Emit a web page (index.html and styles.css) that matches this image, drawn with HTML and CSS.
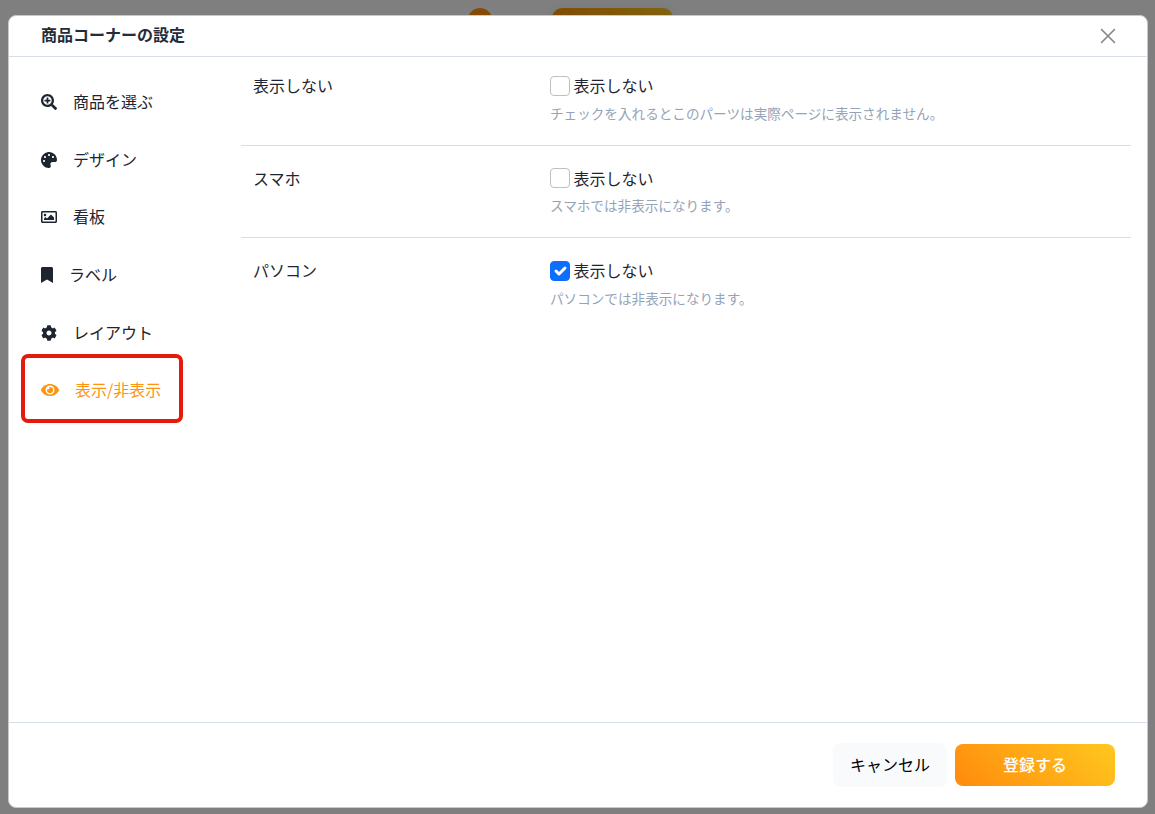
FILE: index.html
```html
<!DOCTYPE html>
<html lang="ja">
<head>
    <meta charset="UTF-8">
    <meta name="viewport" content="width=device-width, initial-scale=1.0">
    <title>商品コーナーの設定</title>
    <link rel="stylesheet" href="styles.css">
</head>
<body>
    <!-- Page behind the modal -->
    <div class="page-behind">
        <span class="behind-dot"></span>
        <span class="behind-button"></span>
    </div>

    <div class="modal">
        <div class="modal-header">
            <h5 class="modal-title">商品コーナーの設定</h5>
            <button type="button" class="btn-close" aria-label="閉じる">
                <svg viewBox="0 0 16 16" width="16" height="16"><path d="M1.5 1.5L14.5 14.5M14.5 1.5L1.5 14.5" fill="none" stroke="currentColor" stroke-width="1.6" stroke-linecap="round"/></svg>
            </button>
        </div>

        <div class="modal-body">
            <!-- Side menu -->
            <ul class="side-menu">
                <li class="menu-item">
                    <svg class="icon" viewBox="0 0 512 512"><path d="M304 192v32c0 6.600-5.400 12-12 12h-56v56c0 6.600-5.400 12-12 12h-32c-6.600 0-12-5.400-12-12v-56h-56c-6.600 0-12-5.400-12-12v-32c0-6.600 5.400-12 12-12h56v-56c0-6.600 5.400-12 12-12h32c6.600 0 12 5.400 12 12v56h56c6.600 0 12 5.400 12 12zm201 284.700L476.700 505c-9.400 9.400-24.600 9.400-33.900 0L343 405.300c-4.500-4.500-7-10.600-7-17V372c-35.300 27.600-79.700 44-128 44C93.100 416 0 322.900 0 208S93.100 0 208 0s208 93.100 208 208c0 48.300-16.400 92.700-44 128h16.300c6.400 0 12.500 2.500 17 7l99.700 99.700c9.300 9.400 9.300 24.600 0 34zM344 208c0-75.200-60.800-136-136-136S72 132.800 72 208s60.800 136 136 136 136-60.800 136-136z"/></svg>
                    <span>商品を選ぶ</span>
                </li>
                <li class="menu-item">
                    <svg class="icon" viewBox="0 0 512 512"><path d="M204.300 5C104.900 24.400 24.800 104.300 5.200 203.400c-37 187 131.700 326.400 258.800 306.700 41.200-6.400 61.400-54.600 42.500-91.700-23.100-45.400 9.900-98.400 60.900-98.400h79.700c35.800 0 64.800-29.600 64.900-65.300C511.500 97.100 368.100-26.900 204.300 5zM96 320c-17.700 0-32-14.300-32-32s14.300-32 32-32 32 14.300 32 32-14.300 32-32 32zm32-128c-17.700 0-32-14.300-32-32s14.300-32 32-32 32 14.300 32 32-14.300 32-32 32zm128-64c-17.700 0-32-14.300-32-32s14.300-32 32-32 32 14.300 32 32-14.300 32-32 32zm128 64c-17.700 0-32-14.300-32-32s14.300-32 32-32 32 14.300 32 32-14.300 32-32 32z"/></svg>
                    <span>デザイン</span>
                </li>
                <li class="menu-item">
                    <svg class="icon" viewBox="0 0 512 512"><path d="M464 64H48C21.490 64 0 85.490 0 112v288c0 26.510 21.490 48 48 48h416c26.510 0 48-21.490 48-48V112c0-26.510-21.490-48-48-48zm-6 336H54a6 6 0 0 1-6-6V118a6 6 0 0 1 6-6h404a6 6 0 0 1 6 6v276a6 6 0 0 1-6 6zM128 152c-22.091 0-40 17.909-40 40s17.909 40 40 40 40-17.909 40-40-17.909-40-40-40zM96 352h320v-80l-87.515-87.515c-4.686-4.686-12.284-4.686-16.971 0L192 304l-39.515-39.515c-4.686-4.686-12.284-4.686-16.971 0L96 304v48z"/></svg>
                    <span>看板</span>
                </li>
                <li class="menu-item">
                    <svg class="icon" viewBox="0 0 384 512"><path d="M0 512V48C0 21.490 21.490 0 48 0h288c26.510 0 48 21.490 48 48v464L192 400 0 512z"/></svg>
                    <span>ラベル</span>
                </li>
                <li class="menu-item">
                    <svg class="icon" viewBox="0 0 512 512"><path d="M487.400 315.700l-42.600-24.600c4.300-23.200 4.300-47 0-70.200l42.600-24.600c4.900-2.800 7.100-8.600 5.500-14-11.100-35.600-30-67.800-54.700-94.600-3.800-4.100-10-5.100-14.800-2.300L380.800 110c-17.900-15.400-38.500-27.300-60.800-35.100V25.800c0-5.600-3.900-10.500-9.400-11.700-36.700-8.200-74.300-7.800-109.200 0-5.500 1.200-9.400 6.100-9.400 11.700V75c-22.200 7.900-42.800 19.800-60.800 35.100L88.700 85.500c-4.900-2.800-11-1.900-14.800 2.300-24.700 26.700-43.600 58.900-54.700 94.600-1.700 5.400.6 11.200 5.500 14L67.300 221c-4.300 23.200-4.300 47 0 70.200l-42.600 24.600c-4.900 2.800-7.100 8.600-5.500 14 11.100 35.600 30 67.800 54.700 94.600 3.800 4.100 10 5.100 14.800 2.300l42.600-24.600c17.900 15.400 38.500 27.300 60.800 35.100v49.200c0 5.600 3.900 10.500 9.400 11.700 36.700 8.200 74.300 7.800 109.200 0 5.500-1.200 9.400-6.100 9.400-11.700v-49.200c22.200-7.900 42.800-19.800 60.800-35.100l42.600 24.600c4.900 2.800 11 1.900 14.800-2.300 24.700-26.700 43.600-58.900 54.700-94.600 1.500-5.500-.7-11.300-5.600-14.100zM256 336c-44.100 0-80-35.900-80-80s35.900-80 80-80 80 35.900 80 80-35.900 80-80 80z"/></svg>
                    <span>レイアウト</span>
                </li>
                <li class="menu-item active">
                    <svg class="icon" viewBox="0 0 576 512"><path d="M572.520 241.400C518.290 135.590 410.930 64 288 64S57.680 135.640 3.480 241.410a32.350 32.350 0 0 0 0 29.190C57.710 376.410 165.070 448 288 448s230.320-71.640 284.520-177.410a32.350 32.350 0 0 0 0-29.190zM288 400a144 144 0 1 1 144-144 143.930 143.930 0 0 1-144 144zm0-240a95.310 95.310 0 0 0-25.310 3.790 47.850 47.850 0 0 1-66.900 66.900A95.780 95.780 0 1 0 288 160z"/></svg>
                    <span>表示/非表示</span>
                </li>
            </ul>

            <!-- Display settings -->
            <div class="settings">
                <div class="setting-row">
                    <div class="setting-label">表示しない</div>
                    <div class="setting-field">
                        <label class="check"><input type="checkbox"><span>表示しない</span></label>
                        <p class="hint">チェックを入れるとこのパーツは実際ページに表示されません。</p>
                    </div>
                </div>
                <div class="setting-row">
                    <div class="setting-label">スマホ</div>
                    <div class="setting-field">
                        <label class="check"><input type="checkbox"><span>表示しない</span></label>
                        <p class="hint">スマホでは非表示になります。</p>
                    </div>
                </div>
                <div class="setting-row">
                    <div class="setting-label">パソコン</div>
                    <div class="setting-field">
                        <label class="check">
                            <input type="checkbox" checked>
                            <svg class="check-mark" viewBox="0 0 20 20"><path d="M6 10l3 3 6-6" fill="none" stroke="#fff" stroke-width="3" stroke-linecap="round" stroke-linejoin="round"/></svg>
                            <span>表示しない</span>
                        </label>
                        <p class="hint">パソコンでは非表示になります。</p>
                    </div>
                </div>
            </div>
        </div>

        <div class="modal-footer">
            <button type="button" class="btn btn-cancel">キャンセル</button>
            <button type="button" class="btn btn-submit">登録する</button>
        </div>
    </div>
</body>
</html>
```
FILE: styles.css
```css
*,
*::after {
    box-sizing: border-box;
}

body {
    margin: 0;
    height: 814px;
    padding: 15px 7px 6px 8px;
    background-color: #7f7f7f;
    font-family: "Noto Sans CJK JP", sans-serif;
    font-size: 16px;
    line-height: 24px;
    color: #1e2530;
    overflow: hidden;
}

/* Page behind the modal */
.page-behind {
    position: absolute;
    top: 8px;
    left: 468px;
    display: flex;
    gap: 60px;
}

.behind-dot {
    width: 24px;
    height: 24px;
    border-radius: 50%;
    background-color: #864a07;
}

.behind-button {
    width: 121px;
    height: 40px;
    border-radius: 10px;
    background: linear-gradient(45deg, #804503, #80640f);
    box-shadow: 0 0 10px rgba(90, 105, 125, 0.3);
}

/* Modal */
.modal {
    position: relative;
    display: flex;
    flex-direction: column;
    height: 793px;
    background-color: #fff;
    border: 1px solid #c9c9c9;
    border-radius: 8px;
}

.modal-header {
    display: flex;
    align-items: center;
    justify-content: space-between;
    height: 41px;
    padding: 0 31px 0 32px;
    border-bottom: 1px solid #d8dee8;
}

.modal-title {
    margin: 0;
    padding-bottom: 4px;
    font-size: 16px;
    font-weight: 700;
    color: #242c38;
}

.btn-close {
    display: flex;
    padding: 0;
    border: none;
    background: none;
    color: #858585;
}

.modal-body {
    flex: 1;
    display: flex;
}

/* Side menu */
.side-menu {
    width: 232px;
    margin: 0;
    padding: 16.2px 0 0 13px;
    list-style: none;
}

.menu-item {
    display: flex;
    align-items: center;
    gap: 16px;
    width: 163px;
    height: 57.7px;
    padding-left: 19px;
}

.menu-item span {
    padding-bottom: 2px;
}

.icon {
    height: 16px;
    fill: currentColor;
}

.menu-item.active {
    position: relative;
    color: #fd9310;
}

.menu-item.active::after {
    content: "";
    position: absolute;
    top: -8px;
    left: -1px;
    width: 162px;
    height: 69px;
    border: 4px solid #e51a0c;
    border-radius: 7px;
}

/* Settings */
.settings {
    flex: 1;
    margin-right: 16px;
}

.setting-row {
    display: flex;
    height: 92.3px;
    padding: 20.4px 12px 0;
    border-bottom: 1px solid #d8dee8;
}

.setting-row:first-child {
    height: 89px;
    padding-top: 17px;
}

.setting-row:last-child {
    border-bottom: none;
}

.setting-label {
    width: 297px;
    margin-top: -0.8px;
}

.check {
    position: relative;
    display: flex;
    align-items: center;
    gap: 3.4px;
    height: 24px;
}

.check span {
    padding-bottom: 1.6px;
}

.check input {
    appearance: none;
    width: 20px;
    height: 20px;
    margin: 0;
    border: 1px solid #bfbfbf;
    border-radius: 4px;
    background-color: #fff;
}

.check input:checked {
    border-color: #0d6efd;
    background-color: #0d6efd;
}

/* Tick lies over the checkbox */
.check-mark {
    position: absolute;
    top: 2px;
    left: 0;
    width: 20px;
    height: 20px;
}

.hint {
    margin: 5px 0 0;
    font-size: 13.6px;
    line-height: 20px;
    color: #94a3b8;
}

/* Footer */
.modal-footer {
    display: flex;
    align-items: center;
    justify-content: flex-end;
    gap: 8px;
    height: 85px;
    padding: 0 32px;
    border-top: 1px solid #d8dee8;
}

.btn {
    padding: 0 0 2px;
    border: none;
    border-radius: 8px;
    font-family: inherit;
    font-size: 16px;
    line-height: 24px;
}

.btn-cancel {
    width: 114px;
    height: 44px;
    background-color: #f8fafc;
    color: #000;
}

.btn-submit {
    width: 160px;
    height: 42px;
    background: linear-gradient(45deg, #ff8a0c, #ffc81e);
    color: #fff;
    font-weight: 500;
}
```
